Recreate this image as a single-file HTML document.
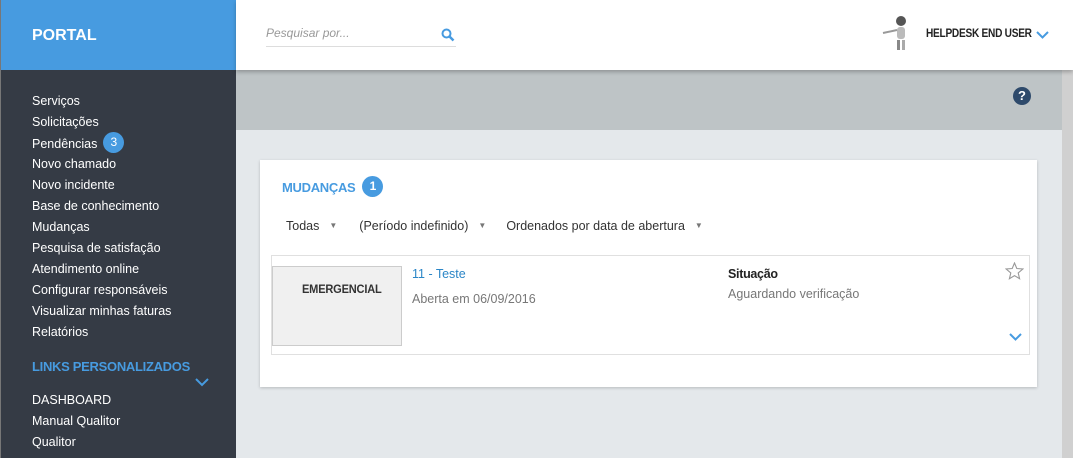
<!DOCTYPE html>
<html><head><meta charset="utf-8"><style>
*{margin:0;padding:0;box-sizing:border-box}
body{width:1073px;height:458px;overflow:hidden;font-family:"Liberation Sans",sans-serif;background:#e4e8eb;position:relative}
.side{position:absolute;left:0;top:0;width:236px;height:458px;background:#353b45;border-left:1px solid #777}
.logo{position:absolute;left:0;top:0;width:236px;height:70px;background:#479be0;color:#fff;font-weight:bold;font-size:16px;padding:27px 0 0 31px}
.nav{position:absolute;left:31px;top:94px;color:#fff;font-size:12.5px}
.nav div{height:21px;line-height:15px}
.badge{display:inline-block;width:21px;height:21px;border-radius:50%;background:#479be0;color:#fff;text-align:center;line-height:21px;font-size:12px;vertical-align:middle;margin-left:6px;margin-top:-4px}
.top{position:absolute;left:236px;top:0;right:0;height:70px;background:#fff;box-shadow:0 2px 4px rgba(0,0,0,.25);z-index:2}
.band{position:absolute;left:236px;top:70px;right:11px;height:60px;background:#bec4c6}
.scroll{position:absolute;right:0;top:70px;width:11px;height:388px;background:#d0d0d0}
.card{position:absolute;left:260px;top:160px;width:777px;height:227px;background:#fff;box-shadow:0 1px 3px rgba(0,0,0,.2)}
.item{position:absolute;left:11px;top:95px;width:759px;height:100px;border:1px solid #e0e0e0}
.emg{position:absolute;left:0;top:10px;width:130px;height:80px;background:#f0f0f0;border:1px solid #ccc;font-weight:bold;font-size:12px;color:#333;padding:15px 0 0 29px}
.emg span{display:inline-block;transform:scaleX(.92);transform-origin:left;letter-spacing:-.2px}
.tri{font-size:8px;color:#777;margin-left:10px;vertical-align:2px}
</style></head><body>
<div class="side">
<div class="logo">PORTAL</div>
<div class="nav">
<div>Serviços</div><div>Solicitações</div><div>Pendências<span class="badge">3</span></div><div>Novo chamado</div><div>Novo incidente</div><div>Base de conhecimento</div><div>Mudanças</div><div>Pesquisa de satisfação</div><div>Atendimento online</div><div>Configurar responsáveis</div><div>Visualizar minhas faturas</div><div>Relatórios</div>
<div style="color:#479be0;font-weight:bold;font-size:13px;margin-top:13px;height:15px;letter-spacing:-.3px">LINKS PERSONALIZADOS</div>
<svg style="position:absolute;left:163px;top:284px" width="14" height="9"><path d="M1 1l6 6 6-6" stroke="#479be0" stroke-width="2" fill="none"/></svg>
<div style="margin-top:19px">DASHBOARD</div><div>Manual Qualitor</div><div>Qualitor</div>
</div></div>
<div class="top">
<div style="position:absolute;left:30px;top:26px;width:190px;height:21px;border-bottom:1px solid #ddd;font-style:italic;color:#999;font-size:12px">Pesquisar por...</div>
<svg style="position:absolute;left:205px;top:28px" width="14" height="14"><circle cx="5.5" cy="5.5" r="4" stroke="#479be0" stroke-width="2" fill="none"/><path d="M8.5 8.5l4 4" stroke="#479be0" stroke-width="2.5"/></svg>
<svg style="position:absolute;left:642px;top:15px" width="40" height="38"><circle cx="23" cy="6" r="5" fill="#555"/><rect x="19" y="12" width="8" height="12" rx="3" fill="#bbb"/><path d="M19 15L5 18" stroke="#999" stroke-width="2"/><rect x="19" y="25" width="3" height="10" fill="#888"/><rect x="24" y="25" width="3" height="10" fill="#aaa"/></svg>
<div style="position:absolute;left:690px;top:28px;font-weight:bold;font-size:11.5px;color:#222;letter-spacing:-.3px;white-space:nowrap;transform:scaleX(.88);transform-origin:left">HELPDESK END USER</div>
<svg style="position:absolute;left:800px;top:31px" width="13" height="9"><path d="M1 1l5.5 5.5L12 1" stroke="#479be0" stroke-width="2" fill="none"/></svg>
</div>
<div class="band"><div style="position:absolute;left:777px;top:17px;width:18px;height:18px;border-radius:50%;background:#2e4a6b;color:#fff;font-weight:bold;font-size:13px;text-align:center;line-height:18px">?</div></div>
<div class="scroll"></div>
<div class="card">
<div style="position:absolute;left:22px;top:20px;color:#479be0;font-weight:bold;font-size:13px;letter-spacing:-.3px">MUDANÇAS<span class="badge" style="margin-left:7px;letter-spacing:0">1</span></div>
<div style="position:absolute;left:26px;top:59px;font-size:12.5px;color:#333">Todas<span class="tri">▼</span><span style="margin-left:22px">(Período indefinido)</span><span class="tri">▼</span><span style="margin-left:20px">Ordenados por data de abertura</span><span class="tri">▼</span></div>
<div class="item">
<div class="emg"><span>EMERGENCIAL</span></div>
<div style="position:absolute;left:140px;top:11px;color:#2b86c7;font-size:12.5px">11 - Teste</div>
<div style="position:absolute;left:140px;top:36px;color:#777;font-size:12.5px">Aberta em 06/09/2016</div>
<div style="position:absolute;left:456px;top:11px;color:#222;font-weight:bold;font-size:12.5px;letter-spacing:-.3px">Situação</div>
<div style="position:absolute;left:456px;top:31px;color:#777;font-size:12.5px">Aguardando verificação</div>
<svg style="position:absolute;left:733px;top:6px" width="19" height="18"><path d="M9.5 1l2.3 5.5 6 .5-4.6 3.9 1.4 5.8-5.1-3.1-5.1 3.1 1.4-5.8L1.2 7l6-.5z" stroke="#999" stroke-width="1.1" fill="none"/></svg>
<svg style="position:absolute;left:737px;top:77px" width="13" height="9"><path d="M1 1l5.5 5.5L12 1" stroke="#479be0" stroke-width="2" fill="none"/></svg>
</div></div>
</body></html>
